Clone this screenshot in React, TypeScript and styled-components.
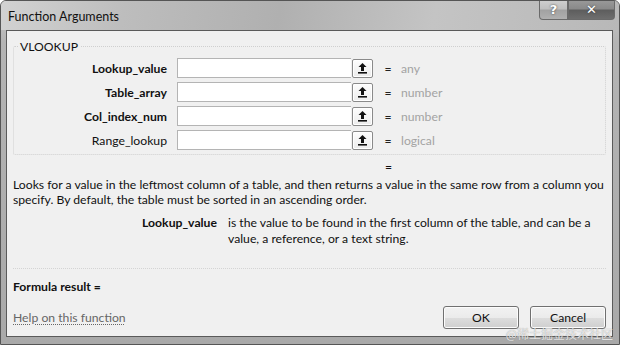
import React from "react";
import styled, { createGlobalStyle } from "styled-components";

const Global = createGlobalStyle`
  html, body { margin: 0; padding: 0; background: #fff; }
  body { font-family: "Lato", "Open Sans", sans-serif; font-size: 12.2px; color: #111; }
`;

const Window = styled.div`
  position: relative;
  width: 620px;
  height: 345px;
  box-sizing: border-box;
  display: flex;
  flex-direction: column;
  background: linear-gradient(180deg, #c9c9c9 0%, #b4b4b4 12%, #a9a9a9 100%);
  border: 1px solid #555;
  border-radius: 6px 6px 0 0;
  overflow: hidden;
`;

const TitleBar = styled.div`
  height: 29px;
  display: flex;
  align-items: flex-start;
  background: linear-gradient(100deg, #d2d2d2 0%, #bdbdbd 20%, #b0b0b0 45%, #c4c4c4 70%, #b8b8b8 100%);
`;

const Title = styled.div`
  padding: 8px 0 0 7px;
  font-size: 12.5px;
  color: #111;
`;

const TitleButtons = styled.div`
  margin-left: auto;
  margin-right: 4px;
  display: flex;
  margin-top: -1px;
`;

const TitleBtn = styled.div<{ $w: number; $dark?: boolean }>`
  width: ${(p) => p.$w}px;
  height: 20px;
  box-sizing: border-box;
  border: 1px solid #6a6a6a;
  border-top: none;
  display: flex;
  align-items: center;
  justify-content: center;
  font-family: "DejaVu Sans", sans-serif;
  font-weight: bold;
  font-size: 13px;
  color: #fff;
  text-shadow: 0 0 2px #333;
  background: ${(p) =>
    p.$dark
      ? "linear-gradient(180deg, #9a9a9a 0%, #8a8a8a 45%, #5e5e5e 55%, #6e6e6e 100%)"
      : "linear-gradient(180deg, #d0d0d0 0%, #c0c0c0 45%, #a2a2a2 55%, #b0b0b0 100%)"};
  border-radius: ${(p) => (p.$dark ? "0 0 4px 0" : "0 0 0 4px")};
`;

const Client = styled.div`
  flex: 1;
  margin: 0 6px 7px 5px;
  background: #f0f0f0;
  border: 1px solid #5a5a5a;
  display: flex;
  flex-direction: column;
  padding: 0 6px 0 6px;
`;

const Group = styled.fieldset`
  margin: 8px 0 0 0;
  padding: 6px 0 6px 0;
  border: 1px dotted #cfcfcf;
  border-radius: 2px;
  height: 116px;
  box-sizing: border-box;
`;

const Legend = styled.legend`
  padding: 0 2px;
  margin-left: 4px;
  font-size: 12.2px;
  color: #111;
`;

const ArgGrid = styled.div`
  display: grid;
  grid-template-columns: 153px 184px 22px 28px auto;
  row-gap: 4px;
  align-items: center;
  margin-top: -2px;
`;

const ArgLabel = styled.div<{ $bold?: boolean }>`
  text-align: right;
  font-weight: ${(p) => (p.$bold ? 700 : 400)};
  color: #111;
`;

const ArgInput = styled.div`
  margin-left: 10px;
  height: 20px;
  box-sizing: border-box;
  background: #fff;
  border: 1px solid #b4b4b4;
  border-right: none;
`;

const RefBtn = styled.div`
  height: 19px;
  width: 21px;
  box-sizing: border-box;
  border: 1px solid #8a8a8a;
  border-radius: 2px;
  background: linear-gradient(180deg, #fdfdfd 0%, #ececec 100%);
  display: flex;
  align-items: center;
  justify-content: center;
  margin-left: 1px;
  box-shadow: inset 0 0 0 1px #fff;
`;

const Eq = styled.div`
  text-align: center;
  color: #222;
  padding-left: 2px;
`;

const TypeText = styled.div`
  color: #a3a3a3;
`;

const EqRow = styled.div`
  padding-left: 372px;
  height: 22px;
  display: flex;
  align-items: center;
`;

const Desc = styled.div`
  line-height: 15px;
  color: #111;
  white-space: nowrap;
`;

const ArgHelp = styled.div`
  display: flex;
  margin-top: 8px;
  line-height: 16px;
`;

const ArgHelpName = styled.div`
  width: 204px;
  text-align: right;
  font-weight: 700;
  padding-right: 11px;
  flex-shrink: 0;
`;

const ArgHelpText = styled.div`
  width: 372px;
`;

const Separator = styled.div`
  margin-top: auto;
  border-top: 1px dotted #d4d4d4;
`;

const Result = styled.div`
  font-weight: 700;
  margin-top: 10px;
`;

const Footer = styled.div`
  display: flex;
  align-items: center;
  margin-top: 12px;
  margin-bottom: 7px;
`;

const HelpLink = styled.a`
  color: #666;
  text-decoration: underline;
  text-decoration-style: dotted;
  text-underline-offset: 2px;
  cursor: pointer;
`;

const Button = styled.button`
  width: 76px;
  height: 23px;
  margin-left: 11px;
  box-sizing: border-box;
  border: 1px solid #707070;
  border-radius: 3px;
  background: linear-gradient(180deg, #f2f2f2 0%, #ebebeb 50%, #dddddd 51%, #cfcfcf 100%);
  font-family: "Lato", "Open Sans", sans-serif;
  font-size: 12.2px;
  color: #111;
  box-shadow: inset 0 0 0 1px #fcfcfc;
  &:first-of-type { margin-left: auto; }
`;

const Watermark = styled.div`
  position: absolute;
  right: 6px;
  bottom: 2px;
  font-family: "Noto Sans CJK SC", sans-serif;
  font-size: 12px;
  color: rgba(255, 255, 255, 0.75);
  text-shadow: 0 0 1px #888;
`;

const UpArrow = () => (
  <svg width="11" height="12" viewBox="0 0 11 12">
    <path d="M5.5 1 L1.5 5 H4 V9 H7 V5 H9.5 Z" fill="#111" />
    <rect x="1" y="10" width="9" height="1.6" fill="#111" />
  </svg>
);

const args = [
  { name: "Lookup_value", bold: true, type: "any" },
  { name: "Table_array", bold: true, type: "number" },
  { name: "Col_index_num", bold: true, type: "number" },
  { name: "Range_lookup", bold: false, type: "logical" },
];

export default function App() {
  return (
    <>
      <Global />
      <Window>
        <TitleBar>
          <Title>Function Arguments</Title>
          <TitleButtons>
            <TitleBtn $w={29}>?</TitleBtn>
            <TitleBtn $w={47} $dark>✕</TitleBtn>
          </TitleButtons>
        </TitleBar>
        <Client>
          <Group>
            <Legend>VLOOKUP</Legend>
            <ArgGrid>
              {args.map((a) => (
                <React.Fragment key={a.name}>
                  <ArgLabel $bold={a.bold}>{a.name}</ArgLabel>
                  <ArgInput />
                  <RefBtn>
                    <UpArrow />
                  </RefBtn>
                  <Eq>=</Eq>
                  <TypeText>{a.type}</TypeText>
                </React.Fragment>
              ))}
            </ArgGrid>
          </Group>
          <EqRow>=</EqRow>
          <Desc>
            Looks for a value in the leftmost column of a table, and then returns a value in the same row from a column you
            <br />
            specify. By default, the table must be sorted in an ascending order.
          </Desc>
          <ArgHelp>
            <ArgHelpName>Lookup_value</ArgHelpName>
            <ArgHelpText>
              is the value to be found in the first column of the table, and can be a value, a reference, or a text string.
            </ArgHelpText>
          </ArgHelp>
          <Separator />
          <Result>Formula result =</Result>
          <Footer>
            <HelpLink>Help on this function</HelpLink>
            <Button>OK</Button>
            <Button>Cancel</Button>
          </Footer>
        </Client>
        <Watermark>@稀土掘金技术社区</Watermark>
      </Window>
    </>
  );
}
